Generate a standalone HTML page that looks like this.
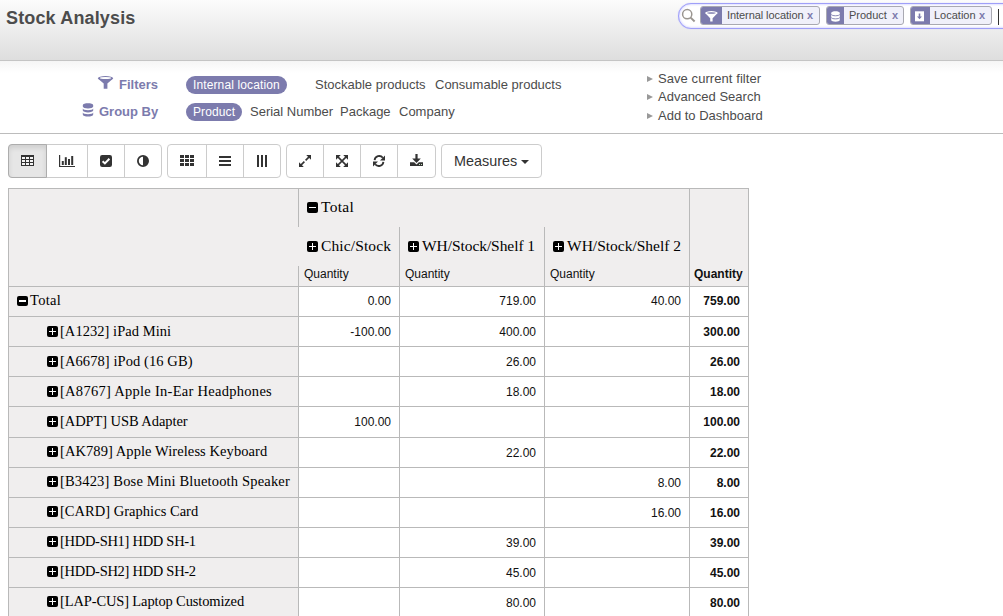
<!DOCTYPE html>
<html><head><meta charset="utf-8">
<style>
*{box-sizing:border-box;margin:0;padding:0}
html,body{width:1003px;height:616px;overflow:hidden;background:#fff;font-family:"Liberation Sans",sans-serif;font-size:13px;color:#4c4c4c}
.abs{position:absolute}
#hdr{position:absolute;left:0;top:0;width:1003px;height:61px;background:linear-gradient(#fcfcfc,#dedede);border-bottom:1px solid #c4c4c4}
#title{position:absolute;left:6px;top:6px;font-size:18px;font-weight:bold;color:#4c4c4c;line-height:24px;letter-spacing:0.15px}
#sbox{position:absolute;left:678px;top:3px;width:360px;height:26px;border:1px solid #9f9ff8;border-radius:13px;background:#fff;box-shadow:0 0 1px #b4b4ff,inset 0 0 2px 1px #e0e0ff}
.facet{position:absolute;top:6px;height:19px;border:1px solid #a9a9b2;border-radius:3px;background:#f0f0fa;overflow:hidden}
.facet .ic{position:absolute;left:0;top:0;bottom:0;width:22px;background:#7c7bad}
.facet .tx{position:absolute;top:0px;line-height:17px;font-size:11px;color:#4c4c4c;white-space:nowrap}
.facet .x{position:absolute;top:0px;line-height:17px;font-size:11px;color:#7c7bad;font-weight:bold}
#drawer{position:absolute;left:0;top:61px;width:1003px;height:73px;border-bottom:1px solid #bcbcbc;background:linear-gradient(#f5f5f5,#fff 12px)}
.lbl{position:absolute;font-weight:bold;color:#7c7bad;font-size:13px;line-height:16px;white-space:nowrap}
.pill{position:absolute;height:18px;border-radius:9px;background:#7c7bad;color:#fff;line-height:18px;padding:0 7px;white-space:nowrap;font-size:12px;letter-spacing:0.12px}
.opt{position:absolute;line-height:16px;white-space:nowrap;color:#4c4c4c}
.act{position:absolute;line-height:16px;white-space:nowrap;color:#4c4c4c;font-size:13px}
.act:before{content:"";position:absolute;left:-11px;top:5px;border-left:6px solid #999;border-top:3px solid transparent;border-bottom:3px solid transparent}
.bg{position:absolute;top:144px;height:34px;border:1px solid #cccccc;border-radius:4px;background:#fff;display:flex;overflow:hidden}
.bg .b{height:32px;border-left:1px solid #cccccc;position:relative}
.bg .b:first-child{border-left:none}
.bg .b.on{background:#e6e6e6;box-shadow:inset 0 3px 5px rgba(0,0,0,.09)}
.bg svg{position:absolute;left:50%;top:50%;transform:translate(-50%,-50%)}
/* pivot */
#pv{position:absolute;left:8px;top:188px;width:741px;height:430px}
.c{position:absolute;background:#f0eeee}
.hl{position:absolute;background:#b9b9b9}
.hh{font-size:15.5px!important}
.rh{position:absolute;font-family:"Liberation Serif",serif;font-size:14.5px;line-height:18px;color:#000;white-space:nowrap}
.qt{position:absolute;font-size:12px;line-height:16px;color:#111;white-space:nowrap}
.num{position:absolute;text-align:right;font-size:12px;line-height:16px;color:#111;white-space:nowrap}
.ico{position:absolute;width:11px;height:10px;background:#000;border-radius:2px}
.ico:before{content:"";position:absolute;left:2.3px;top:calc(50% - 0.7px);width:6.4px;height:1.4px;background:#fff}
.ico.p:after{content:"";position:absolute;left:4.8px;top:calc(50% - 3.2px);width:1.4px;height:6.4px;background:#fff}
</style></head><body>
<div id="hdr">
  <div id="title">Stock Analysis</div>
</div>
<div id="sbox"></div>
<svg class="abs" style="left:681px;top:8px" width="16" height="16" viewBox="0 0 16 16"><circle cx="6.2" cy="6.2" r="4.6" fill="none" stroke="#9a9590" stroke-width="1.5"/><line x1="9.6" y1="9.6" x2="13.6" y2="13.4" stroke="#9a9590" stroke-width="2"/></svg>
<div class="facet" style="left:700px;width:120px"><div class="ic" style="width:21px"><svg class="abs" style="left:4px;top:4px" width="13" height="11" viewBox="0 0 13 11"><ellipse cx="6.4" cy="2" rx="6.2" ry="1.9" fill="#fff"/><path d="M0.4,2.2 L12.4,2.2 L7.6,7.2 L7.6,10.6 L5.2,10.6 L5.2,7.2 Z" fill="#fff"/><ellipse cx="6.4" cy="2" rx="4.4" ry="0.8" fill="#7c7bad"/></svg></div><div class="tx" style="left:26px;letter-spacing:-0.07px">Internal location</div><div class="x" style="left:106px">x</div></div>
<div class="facet" style="left:826px;width:78px"><div class="ic" style="width:17px"><svg class="abs" style="left:4px;top:4px" width="9" height="11" viewBox="0 0 9 11"><path d="M0.2,1.9 C0.2,-0.3 8.8,-0.3 8.8,1.9 L8.8,9 C8.8,11.2 0.2,11.2 0.2,9Z" fill="#fff"/><path d="M0.2,3.4 C0.5,5.2 8.5,5.2 8.8,3.4" fill="none" stroke="#7c7bad" stroke-width="0.9"/><path d="M0.2,6.5 C0.5,8.3 8.5,8.3 8.8,6.5" fill="none" stroke="#7c7bad" stroke-width="0.9"/></svg></div><div class="tx" style="left:22px">Product</div><div class="x" style="left:65px">x</div></div>
<div class="facet" style="left:910px;width:82px"><div class="ic" style="width:19px"><svg class="abs" style="left:4px;top:4px" width="10" height="11" viewBox="0 0 10 11"><rect x="0" y="0.3" width="9" height="10" fill="#fff"/><path d="M3.7,2.5 L5.3,2.5 L5.3,5.6 L7,5.6 L4.5,8.3 L2,5.6 L3.7,5.6Z" fill="#7c7bad"/></svg></div><div class="tx" style="left:23px">Location</div><div class="x" style="left:68px">x</div></div>
<div class="abs" style="left:998px;top:9px;width:1px;height:16px;background:#333"></div>
<div id="drawer">
  <svg class="abs" style="left:97px;top:15px" width="17" height="14" viewBox="0 0 17 14"><ellipse cx="8.5" cy="2.2" rx="7.7" ry="2.2" fill="#7c7bad"/><path d="M0.8,2.4 L16.2,2.4 L10.4,7.6 L10.4,12.8 L6.7,12.8 L6.7,7.6 Z" fill="#7c7bad"/><ellipse cx="8.5" cy="2" rx="5.6" ry="1" fill="#fff"/></svg>
  <svg class="abs" style="left:82px;top:42px" width="12" height="14" viewBox="0 0 12 14"><path d="M0.8,2.3 C0.8,-0.3 11.2,-0.3 11.2,2.3 L11.2,3.6 C11.2,6.2 0.8,6.2 0.8,3.6Z M0.8,5.6 C0.8,7.7 11.2,7.7 11.2,5.6 L11.2,7.6 C11.2,10 0.8,10 0.8,7.6Z M0.8,9.6 C0.8,11.7 11.2,11.7 11.2,9.6 L11.2,11.4 C11.2,14.2 0.8,14.2 0.8,11.4Z" fill="#7c7bad"/></svg>
  <div class="lbl" style="left:119px;top:16px">Filters</div>
  <div class="lbl" style="left:99px;top:43px">Group By</div>
  <div class="pill" style="left:186px;top:15px;width:101px">Internal location</div>
  <div class="opt" style="left:315px;top:16px">Stockable products</div>
  <div class="opt" style="left:435px;top:16px">Consumable products</div>
  <div class="pill" style="left:186px;top:42px;width:56px">Product</div>
  <div class="opt" style="left:250px;top:43px">Serial Number</div>
  <div class="opt" style="left:340px;top:43px">Package</div>
  <div class="opt" style="left:399px;top:43px">Company</div>
  <div class="act" style="left:658px;top:10px;letter-spacing:0.07px">Save current filter</div>
  <div class="act" style="left:658px;top:28px">Advanced Search</div>
  <div class="act" style="left:658px;top:47px">Add to Dashboard</div>
</div>
<div class="bg" style="left:8px;width:154px">
  <div class="b on" style="width:37px"></div><div class="b" style="width:41px"></div><div class="b" style="width:37px"></div><div class="b" style="width:37px"></div>
</div>
<div class="abs" style="left:8px;top:144px;width:39px;height:34px;border:1px solid #adadad;border-radius:4px 0 0 4px;background:#e6e6e6;box-shadow:inset 0 3px 5px rgba(0,0,0,.1)"></div>
<svg class="abs" style="left:21px;top:155px" width="13" height="11" viewBox="0 0 13 11"><rect x="0" y="0" width="13" height="11" fill="#333"/><rect x="1" y="2" width="3" height="2" fill="#f4f4f4"/><rect x="1" y="5" width="3" height="2" fill="#f4f4f4"/><rect x="1" y="8" width="3" height="2" fill="#f4f4f4"/><rect x="5" y="2" width="3" height="2" fill="#f4f4f4"/><rect x="5" y="5" width="3" height="2" fill="#f4f4f4"/><rect x="5" y="8" width="3" height="2" fill="#f4f4f4"/><rect x="9" y="2" width="3" height="2" fill="#f4f4f4"/><rect x="9" y="5" width="3" height="2" fill="#f4f4f4"/><rect x="9" y="8" width="3" height="2" fill="#f4f4f4"/></svg>
<svg class="abs" style="left:59px;top:155px" width="16" height="12" viewBox="0 0 16 12"><rect x="0" y="0" width="1.2" height="12" fill="#333"/><rect x="0" y="11" width="16" height="1.1" fill="#333"/><rect x="2.8" y="6" width="2" height="4" fill="#333"/><rect x="5.8" y="2.2" width="2" height="7.8" fill="#333"/><rect x="9" y="4" width="2" height="6" fill="#333"/><rect x="12.2" y="1" width="2" height="9" fill="#333"/></svg>
<svg class="abs" style="left:100px;top:155px" width="12" height="12" viewBox="0 0 12 12"><rect x="0" y="0" width="12" height="12" rx="2.2" fill="#333"/><path d="M2.6,6.2 L4.9,8.4 L9.4,3.8" fill="none" stroke="#fff" stroke-width="2"/></svg>
<svg class="abs" style="left:137px;top:155px" width="12" height="12" viewBox="0 0 12 12"><circle cx="6" cy="6" r="5.1" fill="none" stroke="#333" stroke-width="1.8"/><path d="M6,0.9 A5.1,5.1 0 0 1 6,11.1Z" fill="#333"/></svg>
<div class="bg" style="left:167px;width:114px">
  <div class="b" style="width:38px"></div><div class="b" style="width:37px"></div><div class="b" style="width:37px"></div>
</div>
<svg class="abs" style="left:180px;top:155px" width="14" height="11" viewBox="0 0 14 11"><rect x="0" y="0" width="4" height="3" fill="#333"/><rect x="0" y="4" width="4" height="3" fill="#333"/><rect x="0" y="8" width="4" height="3" fill="#333"/><rect x="5" y="0" width="4" height="3" fill="#333"/><rect x="5" y="4" width="4" height="3" fill="#333"/><rect x="5" y="8" width="4" height="3" fill="#333"/><rect x="10" y="0" width="4" height="3" fill="#333"/><rect x="10" y="4" width="4" height="3" fill="#333"/><rect x="10" y="8" width="4" height="3" fill="#333"/></svg>
<svg class="abs" style="left:219px;top:156px" width="12" height="11" viewBox="0 0 12 11"><rect x="0" y="0" width="12" height="2" fill="#333"/><rect x="0" y="4" width="12" height="2" fill="#333"/><rect x="0" y="8" width="12" height="2" fill="#333"/></svg>
<svg class="abs" style="left:257px;top:155px" width="10" height="12" viewBox="0 0 10 12"><rect x="0" y="0" width="2" height="12" fill="#333"/><rect x="4" y="0" width="2" height="12" fill="#333"/><rect x="8" y="0" width="2" height="12" fill="#333"/></svg>
<div class="bg" style="left:286px;width:150px">
  <div class="b" style="width:36px"></div><div class="b" style="width:37px"></div><div class="b" style="width:37px"></div><div class="b" style="width:38px"></div>
</div>
<svg class="abs" style="left:299px;top:155px" width="12" height="12" viewBox="0 0 12 12"><path d="M12,0 L12,4.8 L7.2,0Z M0,12 L0,7.2 L4.8,12Z" fill="#333"/><path d="M10.6,1.4 L6.6,5.4 M5.4,6.6 L1.4,10.6" stroke="#333" stroke-width="1.6"/></svg>
<svg class="abs" style="left:336px;top:155px" width="12" height="12" viewBox="0 0 12 12"><path d="M0,0 L4.8,0 L0,4.8Z M12,0 L12,4.8 L7.2,0Z M0,12 L0,7.2 L4.8,12Z M12,12 L7.2,12 L12,7.2Z" fill="#333"/><path d="M1.4,1.4 L10.6,10.6 M10.6,1.4 L1.4,10.6" stroke="#333" stroke-width="1.6"/></svg>
<svg class="abs" style="left:373px;top:155px" width="12" height="12" viewBox="0 0 12 12"><path d="M1.6,5.2 A4.6,4.6 0 0 1 9.8,2.8" fill="none" stroke="#333" stroke-width="1.8"/><path d="M12,0.5 L12,5.6 L7,5.6Z" fill="#333"/><path d="M10.4,6.8 A4.6,4.6 0 0 1 2.2,9.2" fill="none" stroke="#333" stroke-width="1.8"/><path d="M0,11.5 L0,6.4 L5,6.4Z" fill="#333"/></svg>
<svg class="abs" style="left:410px;top:154px" width="13" height="12" viewBox="0 0 13 12"><rect x="5.4" y="0" width="2.2" height="5.5" fill="#333"/><path d="M2.2,4.6 L10.8,4.6 L6.5,9Z" fill="#333"/><path d="M0,8.2 L4.2,8.2 L6.5,10.4 L8.8,8.2 L13,8.2 L13,12 L0,12Z" fill="#333"/><rect x="9" y="10" width="1" height="1" fill="#bfe0b8"/><rect x="11" y="10" width="1" height="1" fill="#bfe0b8"/></svg>
<div class="bg" style="left:441px;width:101px;">
  <div class="b" style="width:99px;font-size:14.4px;line-height:31px;padding-top:1px;padding-left:12px;color:#333">Measures</div>
</div>
<div class="abs" style="left:521px;top:160px;width:0;height:0;border-top:4px solid #333;border-left:4px solid transparent;border-right:4px solid transparent"></div>
<div class="c" style="left:8px;top:188px;width:741px;height:99px"></div>
<div class="c" style="left:8px;top:286px;width:291px;height:330px"></div>
<div class="abs" style="left:299px;top:287px;width:449px;height:330px;background:#fff"></div>
<div class="hl" style="left:8px;top:188px;width:741px;height:1px"></div>
<div class="hl" style="left:8px;top:188px;width:1px;height:430px"></div>
<div class="hl" style="left:748px;top:188px;width:1px;height:430px"></div>
<div class="hl" style="left:298px;top:188px;width:1px;height:39px"></div>
<div class="hl" style="left:298px;top:266px;width:1px;height:352px"></div>
<div class="hl" style="left:399px;top:227px;width:1px;height:391px"></div>
<div class="hl" style="left:544px;top:227px;width:1px;height:391px"></div>
<div class="hl" style="left:689px;top:188px;width:1px;height:430px"></div>
<div class="hl" style="left:8px;top:286px;width:741px;height:1px"></div>
<div class="hl" style="left:8px;top:316px;width:741px;height:1px"></div>
<div class="hl" style="left:8px;top:346px;width:741px;height:1px"></div>
<div class="hl" style="left:8px;top:376px;width:741px;height:1px"></div>
<div class="hl" style="left:8px;top:406px;width:741px;height:1px"></div>
<div class="hl" style="left:8px;top:437px;width:741px;height:1px"></div>
<div class="hl" style="left:8px;top:467px;width:741px;height:1px"></div>
<div class="hl" style="left:8px;top:497px;width:741px;height:1px"></div>
<div class="hl" style="left:8px;top:527px;width:741px;height:1px"></div>
<div class="hl" style="left:8px;top:557px;width:741px;height:1px"></div>
<div class="hl" style="left:8px;top:587px;width:741px;height:1px"></div>
<div class="ico" style="left:307px;top:202px;height:11px"></div><div class="rh hh" style="left:321px;top:198px;letter-spacing:0.3px">Total</div>
<div class="ico p" style="left:307px;top:241px;height:11px"></div><div class="rh hh" style="left:321px;top:237px;letter-spacing:0.12px">Chic/Stock</div>
<div class="ico p" style="left:408px;top:241px;height:11px"></div><div class="rh hh" style="left:422px;top:237px;letter-spacing:-0.07px">WH/Stock/Shelf 1</div>
<div class="ico p" style="left:553px;top:241px;height:11px"></div><div class="rh hh" style="left:567px;top:237px">WH/Stock/Shelf 2</div>
<div class="qt" style="left:304px;top:266px">Quantity</div>
<div class="qt" style="left:405px;top:266px">Quantity</div>
<div class="qt" style="left:550px;top:266px">Quantity</div>
<div class="qt" style="left:694px;top:266px;font-weight:bold">Quantity</div>
<div class="ico" style="left:17px;top:296px;height:10px"></div><div class="rh" style="left:30px;top:291px;letter-spacing:0.3px">Total</div>
<div class="num" style="right:612px;top:293px">0.00</div>
<div class="num" style="right:467px;top:293px">719.00</div>
<div class="num" style="right:322px;top:293px">40.00</div>
<div class="num" style="right:263px;top:293px;font-weight:bold">759.00</div>
<div class="ico p" style="left:47px;top:326px;height:11px"></div><div class="rh" style="left:60px;top:322px;letter-spacing:0.044px">[A1232] iPad Mini</div>
<div class="num" style="right:612px;top:324px">-100.00</div>
<div class="num" style="right:467px;top:324px">400.00</div>
<div class="num" style="right:263px;top:324px;font-weight:bold">300.00</div>
<div class="ico p" style="left:47px;top:356px;height:11px"></div><div class="rh" style="left:60px;top:352px;letter-spacing:0.084px">[A6678] iPod (16 GB)</div>
<div class="num" style="right:467px;top:354px">26.00</div>
<div class="num" style="right:263px;top:354px;font-weight:bold">26.00</div>
<div class="ico p" style="left:47px;top:386px;height:11px"></div><div class="rh" style="left:60px;top:382px;letter-spacing:0.28px">[A8767] Apple In-Ear Headphones</div>
<div class="num" style="right:467px;top:384px">18.00</div>
<div class="num" style="right:263px;top:384px;font-weight:bold">18.00</div>
<div class="ico p" style="left:47px;top:416px;height:11px"></div><div class="rh" style="left:60px;top:412px;letter-spacing:-0.076px">[ADPT] USB Adapter</div>
<div class="num" style="right:612px;top:414px">100.00</div>
<div class="num" style="right:263px;top:414px;font-weight:bold">100.00</div>
<div class="ico p" style="left:47px;top:446px;height:11px"></div><div class="rh" style="left:60px;top:442px;letter-spacing:0.077px">[AK789] Apple Wireless Keyboard</div>
<div class="num" style="right:467px;top:445px">22.00</div>
<div class="num" style="right:263px;top:445px;font-weight:bold">22.00</div>
<div class="ico p" style="left:47px;top:476px;height:11px"></div><div class="rh" style="left:60px;top:472px;letter-spacing:0.171px">[B3423] Bose Mini Bluetooth Speaker</div>
<div class="num" style="right:322px;top:475px">8.00</div>
<div class="num" style="right:263px;top:475px;font-weight:bold">8.00</div>
<div class="ico p" style="left:47px;top:506px;height:11px"></div><div class="rh" style="left:60px;top:502px;letter-spacing:0.026px">[CARD] Graphics Card</div>
<div class="num" style="right:322px;top:505px">16.00</div>
<div class="num" style="right:263px;top:505px;font-weight:bold">16.00</div>
<div class="ico p" style="left:47px;top:536px;height:11px"></div><div class="rh" style="left:60px;top:532px;letter-spacing:-0.285px">[HDD-SH1] HDD SH-1</div>
<div class="num" style="right:467px;top:535px">39.00</div>
<div class="num" style="right:263px;top:535px;font-weight:bold">39.00</div>
<div class="ico p" style="left:47px;top:566px;height:11px"></div><div class="rh" style="left:60px;top:562px;letter-spacing:-0.285px">[HDD-SH2] HDD SH-2</div>
<div class="num" style="right:467px;top:565px">45.00</div>
<div class="num" style="right:263px;top:565px;font-weight:bold">45.00</div>
<div class="ico p" style="left:47px;top:596px;height:11px"></div><div class="rh" style="left:60px;top:592px;letter-spacing:-0.135px">[LAP-CUS] Laptop Customized</div>
<div class="num" style="right:467px;top:595px">80.00</div>
<div class="num" style="right:263px;top:595px;font-weight:bold">80.00</div>
</body></html>
